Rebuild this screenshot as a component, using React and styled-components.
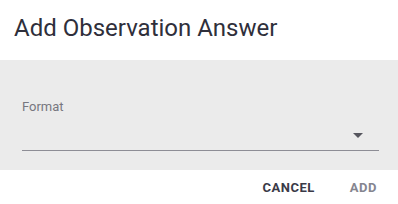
import styled, { createGlobalStyle } from 'styled-components';

const GlobalStyle = createGlobalStyle`
    body {
        margin: 0;
        background: #fff;
        font-family: Roboto, "Liberation Sans", sans-serif;
    }
`;

const Dialog = styled.div`
    width: 398px;
    height: 204px;
    display: flex;
    flex-direction: column;
    background: #fff;
`;

const Titulo = styled.h2`
    margin: 0;
    height: 60px;
    padding: 0 0 5px 14px;
    box-sizing: border-box;
    display: flex;
    align-items: center;
    font-size: 24px;
    font-weight: 400;
    color: #2f2f3b;
`;

const Conteudo = styled.section`
    height: 110px;
    background: #ebebeb;
    padding: 39px 19px 0 22px;
    box-sizing: border-box;
`;

const Rotulo = styled.label`
    display: block;
    font-size: 13px;
    color: #77777f;
    line-height: 15px;
`;

const Select = styled.div`
    height: 37px;
    border-bottom: 1px solid #8d8d95;
    display: flex;
    align-items: center;
    justify-content: flex-end;
    padding: 7px 16px 0 0;
    box-sizing: border-box;
`;

const Seta = styled.span`
    width: 0;
    height: 0;
    border-left: 5px solid transparent;
    border-right: 5px solid transparent;
    border-top: 5px solid #56565e;
`;

const Acoes = styled.div`
    flex: 1;
    display: flex;
    justify-content: flex-end;
    align-items: center;
    gap: 19px;
    padding: 0 13px 0 0;
`;

const Botao = styled.button`
    border: none;
    background: none;
    padding: 6px 8px;
    font-family: inherit;
    font-size: 13px;
    font-weight: 700;
    letter-spacing: 0.5px;
    text-transform: uppercase;
    color: ${props => (props.$disabled ? '#85858f' : '#3a3a47')};
    cursor: pointer;
`;

function App() {
    return (
        <Dialog>
            <GlobalStyle />
            <Titulo>Add Observation Answer</Titulo>
            <Conteudo>
                <Rotulo>Format</Rotulo>
                <Select>
                    <Seta />
                </Select>
            </Conteudo>
            <Acoes>
                <Botao>Cancel</Botao>
                <Botao $disabled>Add</Botao>
            </Acoes>
        </Dialog>
    );
}

export default App;
